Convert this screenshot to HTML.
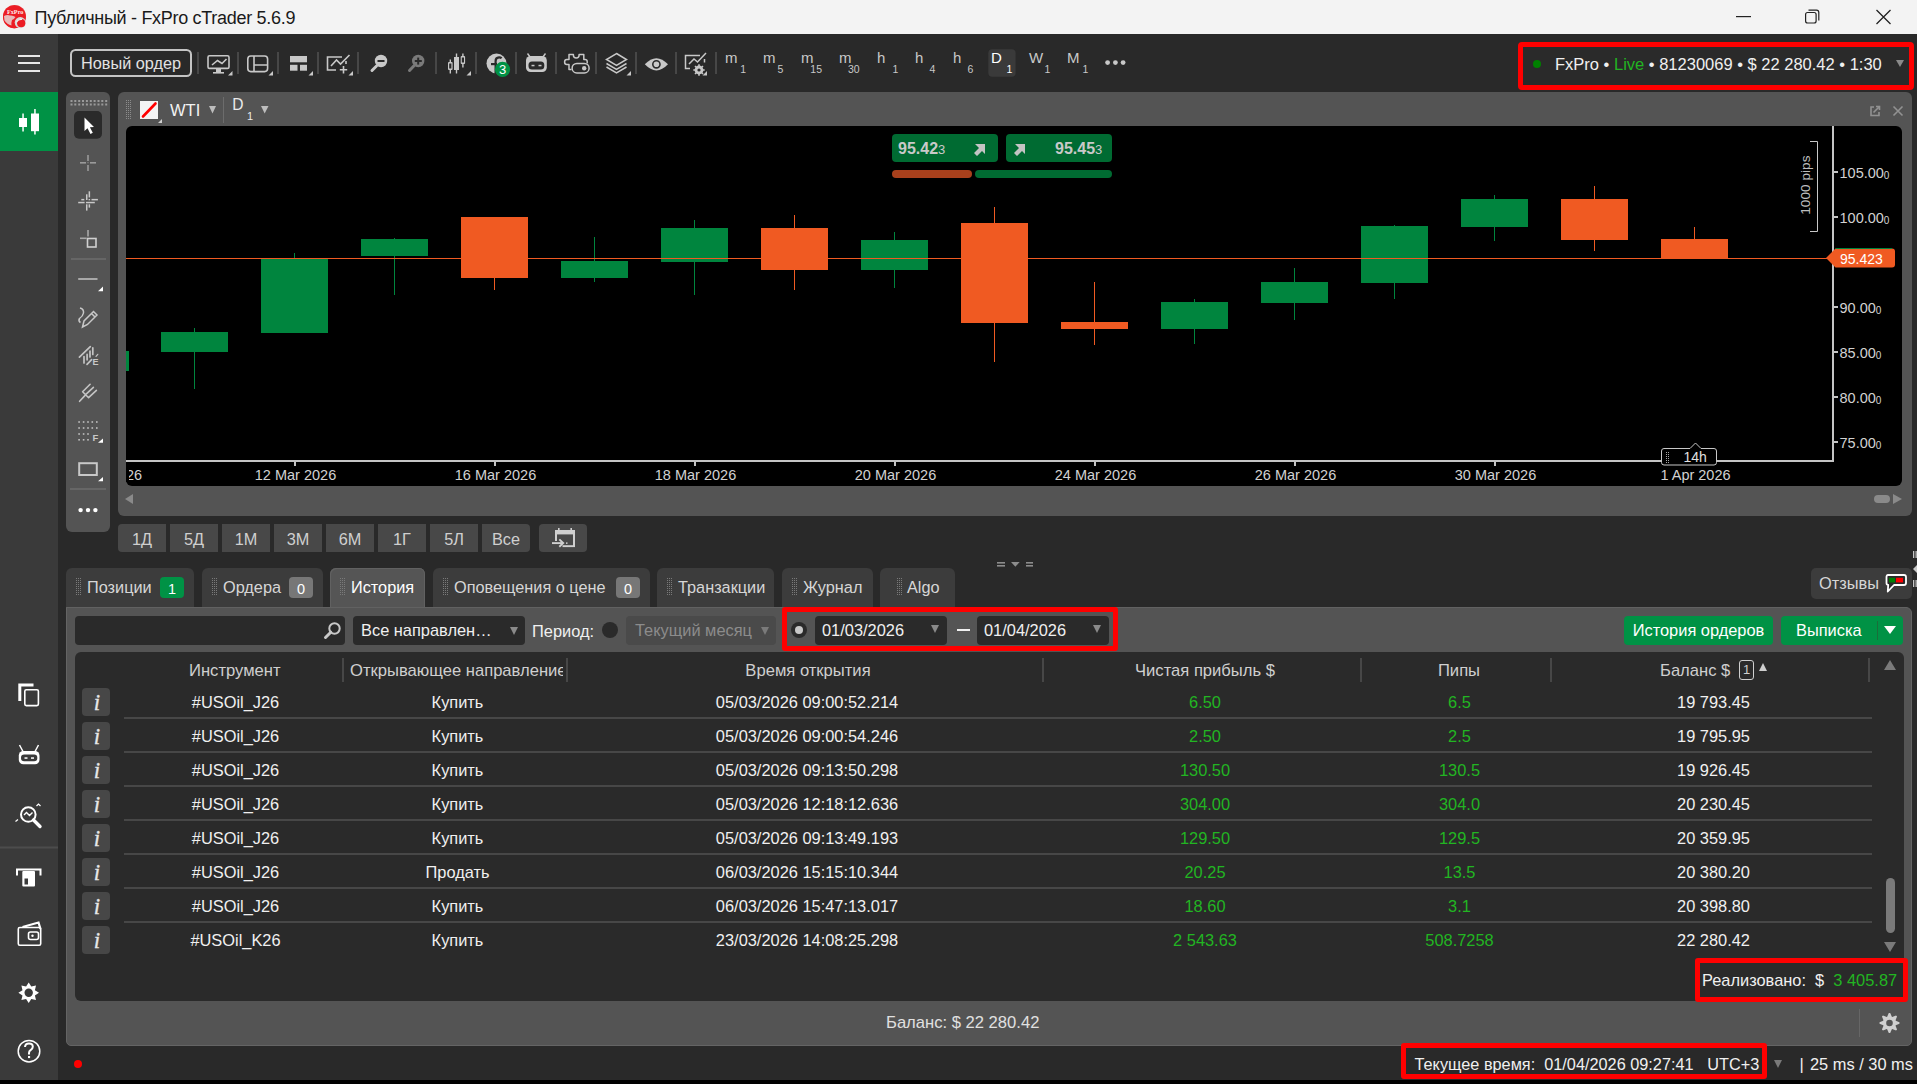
<!DOCTYPE html>
<html><head><meta charset="utf-8">
<style>
*{margin:0;padding:0;box-sizing:border-box}
html,body{width:1917px;height:1084px;overflow:hidden;background:#292929;font-family:"Liberation Sans",sans-serif;font-size:16px;color:#e6e6e6}
.a{position:absolute}
.t{position:absolute;white-space:pre;line-height:1}
svg{position:absolute;overflow:visible}
.btn{position:absolute;top:524px;height:28px;background:#484848;color:#cfcfcf;font-size:16.3px;line-height:30px;text-align:center}
.tab{position:absolute;top:568px;height:39px;background:#3c3c3c;border-radius:6px 6px 0 0;color:#d6d6d6;font-size:16.3px;line-height:38px;padding-left:21px;white-space:pre}
.tab.act{background:#555555;color:#ffffff;height:40px;box-shadow:inset 1px 1px 0 #616161,inset -1px 0 0 #616161}
.grip{position:absolute;left:10px;top:10px}
.badge{display:inline-block;position:absolute;right:10px;top:9px;width:24px;height:21px;border-radius:4px;color:#fff;text-align:center;line-height:24px;font-size:14.5px}
.ib{position:absolute;left:82px;width:28px;height:28px;background:#474747;border-radius:4px;color:#e8e8e8;font-family:"Liberation Serif",serif;font-style:italic;font-size:23px;line-height:29px;text-align:center;text-indent:2px;color:#e8e8e8;-webkit-text-stroke:0.3px #e8e8e8}
.td{position:absolute;width:300px;height:34px;line-height:34px;text-align:center;font-size:16.4px;white-space:pre}
.th{position:absolute;top:659px;height:24px;line-height:24px;font-size:16.6px;color:#cfcfcf;white-space:pre}
.csep{position:absolute;top:658px;width:2px;height:24px;background:#474747}
.inp{position:absolute;top:616px;height:29px;background:#2a2a2a;border-radius:4px;font-size:16.4px;line-height:29px;color:#f0f0f0;white-space:pre}
.arr{position:absolute;width:0;height:0;border-left:4px solid transparent;border-right:4px solid transparent;border-top:8px solid #8a8a8a}

</style></head><body>
<!-- TITLE BAR -->
<div class="a" style="left:0;top:0;width:1917px;height:34px;background:#f3f3f3"></div>
<div class="a" style="left:3px;top:5px;width:23px;height:23px;border-radius:50%;background:#e8262b"></div>
<div class="t" style="left:34.5px;top:8.6px;font-size:18px;letter-spacing:-0.3px;color:#1a1a1a">Публичный - FxPro cTrader 5.6.9</div>


<!-- LEFT NAV -->
<div class="a" style="left:0;top:34px;width:58px;height:1046px;background:#3a3a3a"></div>
<div class="a" style="left:0;top:92px;width:58px;height:59px;background:#009245"></div>

<!-- TITLE DETAILS -->
<svg class="a" style="left:0;top:0" width="40" height="34">
<circle cx="14.3" cy="17.2" r="11.2" fill="#ec1c24"/>
<path d="M4 16 Q7 14.5 10 15.5 Q13 15 15.5 17 Q14 19.5 12 20 Q11 23 11.5 25.5 Q7 24.5 4.5 20.5 Z" fill="#e8d6d6" opacity="0.85"/>
<circle cx="20.3" cy="22.6" r="5.6" fill="#d9d9d9"/>
<circle cx="21.2" cy="23.2" r="4.1" fill="#ec1c24"/>
<path d="M16.5 22 Q18.5 19 22 19.5" stroke="#f4f4f4" stroke-width="1.2" fill="none"/>
<text x="7" y="13.6" font-size="6.2" fill="#ffeaea" font-family="Liberation Serif" font-weight="bold">FxPro</text>
</svg>
<svg class="a" style="left:1720px;top:0" width="197" height="34">
<rect x="16" y="16" width="15" height="1.2" fill="#222"/>
<rect x="85.6" y="12.5" width="10.5" height="10.5" rx="2" fill="none" stroke="#222" stroke-width="1.2"/>
<path d="M88.5 10.2 H96.5 Q98.8 10.2 98.8 12.5 V20.5" fill="none" stroke="#222" stroke-width="1.2"/>
<path d="M156.5 10 L170.5 24 M170.5 10 L156.5 24" stroke="#222" stroke-width="1.3"/>
</svg>

<!-- TOP TOOLBAR -->
<svg class="a" style="left:0;top:34px" width="1917" height="58" viewBox="0 34 1917 58">
<g fill="#e6e6e6"><rect x="18" y="55" width="22" height="2"/><rect x="18" y="62" width="22" height="2"/><rect x="18" y="70" width="22" height="2"/></g>
<rect x="71" y="50" width="120" height="26" rx="4.5" fill="none" stroke="#c4c4c4" stroke-width="2"/>
<text x="81" y="69" font-size="16.3" fill="#e2e2e2" font-family="Liberation Sans">Новый ордер</text>
<g fill="#474747">
<rect x="197" y="52" width="2" height="22"/><rect x="237" y="52" width="2" height="22"/><rect x="277" y="52" width="2" height="22"/>
<rect x="317" y="52" width="2" height="22"/><rect x="357" y="52" width="2" height="22"/><rect x="435" y="52" width="2" height="22"/>
<rect x="475" y="52" width="2" height="22"/><rect x="515" y="52" width="2" height="22"/><rect x="555" y="52" width="2" height="22"/>
<rect x="595" y="52" width="2" height="22"/><rect x="635" y="52" width="2" height="22"/><rect x="675" y="52" width="2" height="22"/>
<rect x="715" y="52" width="2" height="22"/>
</g>
<g fill="#c8c8c8">
<path d="M228 75.5 L232.5 71 V75.5 Z"/><path d="M268.5 75.5 L273 71 V75.5 Z"/><path d="M308.5 75.5 L313 71 V75.5 Z"/>
<path d="M348.5 75.5 L353 71 V75.5 Z"/><path d="M466.5 75.5 L471 71 V75.5 Z"/><path d="M626.5 75.5 L631 71 V75.5 Z"/>
<path d="M702.5 75.5 L707 71 V75.5 Z"/>
</g>
<!-- monitor -->
<g stroke="#c8c8c8" fill="none" stroke-width="1.6">
<rect x="208" y="55.8" width="21" height="12.6" rx="1.5"/>
<path d="M212 65 L217.5 60.5 L222 63.5 L226.5 59"/>
</g>
<rect x="216" y="68.5" width="5" height="4" fill="#c8c8c8"/><rect x="213" y="72" width="11" height="1.6" fill="#c8c8c8"/>
<!-- layout -->
<g stroke="#c8c8c8" fill="none" stroke-width="1.6">
<rect x="247.8" y="56" width="19.8" height="15.6" rx="3"/>
<path d="M254 56 V71.6 M254 65 H267.6"/>
</g>
<!-- template -->
<g fill="#c8c8c8"><rect x="290" y="56" width="17" height="6.3"/><rect x="290" y="64.8" width="7.5" height="5.9"/><rect x="300" y="64.8" width="7" height="5.9"/></g>
<!-- add indicator -->
<g stroke="#c8c8c8" fill="none" stroke-width="1.6">
<path d="M342 57 H327.5 V70 H336"/>
<path d="M331 66 L336.5 60 L340.5 64 L349.5 55"/>
<path d="M343.5 66 V73.5 M339.8 69.8 H347.2"/>
<path d="M346 61 V64"/>
</g>
<!-- zoom out -->
<circle cx="381" cy="61" r="6.2" fill="#c8c8c8"/>
<rect x="377.5" y="60" width="7" height="2" fill="#2a2a2a"/>
<path d="M376.5 66 L372 70.5" stroke="#c8c8c8" stroke-width="3" stroke-linecap="round"/>
<!-- zoom in -->
<circle cx="418.2" cy="61" r="6.2" fill="#7a7a7a"/>
<rect x="414.8" y="60" width="7" height="2" fill="#2a2a2a"/><rect x="417.2" y="57.6" width="2" height="7" fill="#2a2a2a"/>
<path d="M413.8 66 L409.5 70.5" stroke="#7a7a7a" stroke-width="3" stroke-linecap="round"/>
<!-- candles -->
<g fill="#c8c8c8">
<rect x="449.6" y="59.5" width="1.4" height="14"/><rect x="448" y="62" width="4.6" height="8" rx="1"/>
<rect x="455.8" y="53.5" width="1.4" height="20"/><rect x="454" y="57" width="5" height="13"/>
<rect x="462.2" y="53.5" width="1.4" height="14"/><rect x="460.7" y="56" width="4.4" height="8" rx="1"/>
</g>
<rect x="449.2" y="63.5" width="2.2" height="5" fill="#2a2a2a"/><rect x="461.8" y="57.5" width="2.2" height="5" fill="#2a2a2a"/>
<!-- copy trading badge -->
<circle cx="496.5" cy="63.5" r="10" fill="#c8c8c8"/>
<path d="M495.6 74 V61 Q495.6 57.6 499 57.4 Q500.6 57.3 501.6 58.3" stroke="#2a2a2a" stroke-width="2.2" fill="none"/><rect x="491" y="63" width="6" height="2.2" fill="#2a2a2a"/>
<circle cx="502.5" cy="69.4" r="7.6" fill="#009245"/>
<text x="502.5" y="74.3" font-size="13" fill="#ffffff" font-family="Liberation Sans" text-anchor="middle">3</text>
<!-- robot -->
<path d="M527.5 53.5 L530.5 57.5 M545.5 53.5 L542.5 57.5" stroke="#c8c8c8" stroke-width="1.4"/>
<rect x="526" y="56" width="20.8" height="16" rx="4.5" fill="#c8c8c8"/>
<rect x="528.5" y="61.5" width="15.8" height="8" rx="3.5" fill="#2a2a2a"/>
<rect x="531.5" y="64.8" width="3" height="1.5" fill="#c8c8c8"/><rect x="538.5" y="64.8" width="3" height="1.5" fill="#c8c8c8"/>
<!-- plugin -->
<g stroke="#c8c8c8" fill="none" stroke-width="1.5" stroke-linejoin="round">
<path d="M571.5 69.4 H569 V64.5 H566.8 Q564.6 64.5 564.6 62 Q564.6 59.5 566.8 59.5 H569 V54.4 H573.4 V55.3 Q573.4 58 576.25 58 Q579.1 58 579.1 55.3 V54.4 H583.8 V59.6 H585 Q587.2 59.6 587.2 61.6 V63.6"/>
<rect x="572.1" y="63.4" width="17" height="9.5" rx="4.75"/>
</g>
<circle cx="584.2" cy="68.2" r="2.2" fill="#c8c8c8"/>
<!-- layers -->
<g stroke="#c8c8c8" fill="none" stroke-width="1.5">
<path d="M616.5 53.5 L626.5 59.5 L616.5 65.5 L606.5 59.5 Z"/>
<path d="M606.5 63.5 L616.5 69.5 L626.5 63.5"/>
<path d="M606.5 67 L616.5 73 L626.5 67"/>
</g>
<!-- eye -->
<path d="M644.8 64.3 Q656.4 52 668 64.3 Q656.4 76.5 644.8 64.3 Z" fill="#c8c8c8"/>
<circle cx="656.4" cy="64.3" r="3.6" fill="none" stroke="#2a2a2a" stroke-width="1.6"/>
<!-- chart settings -->
<g stroke="#c8c8c8" fill="none" stroke-width="1.5">
<path d="M700 55.5 H685.5 V68.5 H690"/>
<path d="M689 64 L694 59 L697.5 62 L706 53"/>
<path d="M704.5 59 V62.5"/>
</g>
<circle cx="699" cy="70" r="4.4" fill="#c8c8c8"/><circle cx="699" cy="70" r="1.6" fill="#2a2a2a"/>
<g stroke="#c8c8c8" stroke-width="1.6"><path d="M699 64.3 V75.7 M693.3 70 H704.7 M695 66 L703 74 M703 66 L695 74"/></g>
<circle cx="699" cy="70" r="1.6" fill="#2a2a2a"/>
<!-- timeframes -->
<g fill="#c8c8c8" font-family="Liberation Sans">
<text x="725" y="63" font-size="15">m</text><text x="740.3" y="72.8" font-size="10.5">1</text>
<text x="763" y="63" font-size="15">m</text><text x="777.6" y="72.8" font-size="10.5">5</text>
<text x="801" y="63" font-size="15">m</text><text x="810.3" y="72.8" font-size="10.5">15</text>
<text x="839" y="63" font-size="15">m</text><text x="848" y="72.8" font-size="10.5">30</text>
<text x="877" y="63" font-size="15">h</text><text x="892.4" y="72.8" font-size="10.5">1</text>
<text x="915" y="63" font-size="15">h</text><text x="929.6" y="72.8" font-size="10.5">4</text>
<text x="953" y="63" font-size="15">h</text><text x="967.4" y="72.8" font-size="10.5">6</text>
<text x="1029" y="63" font-size="15">W</text><text x="1044.6" y="72.8" font-size="10.5">1</text>
<text x="1067" y="63" font-size="15">M</text><text x="1082.6" y="72.8" font-size="10.5">1</text>
</g>
<rect x="988.3" y="49.2" width="27.3" height="27.5" rx="4" fill="#3a3a3a"/>
<text x="991" y="63" font-size="15" fill="#ffffff" font-family="Liberation Sans">D</text>
<text x="1006.6" y="72.8" font-size="10.5" fill="#ffffff" font-family="Liberation Sans">1</text>
<g fill="#c8c8c8"><circle cx="1107.6" cy="62.6" r="2.4"/><circle cx="1115.4" cy="62.6" r="2.4"/><circle cx="1123.1" cy="62.6" r="2.4"/></g>
<!-- account -->
<rect x="1520.5" y="44.5" width="391" height="43" fill="#2a2a2a" stroke="#ff0000" stroke-width="5" rx="1.5"/>
<circle cx="1537" cy="64" r="4" fill="#008000"/>
<text x="1555" y="70" font-size="16.5" fill="#f0f0f0" font-family="Liberation Sans" xml:space="preserve">FxPro • <tspan fill="#22b522">Live</tspan> • 81230069 • $ 22 280.42 • 1:30</text>
<path d="M1896 60 L1904 60 L1900 67 Z" fill="#8a8a8a"/>
</svg>


<!-- DRAWING TOOLBAR -->
<div class="a" style="left:66px;top:92px;width:44px;height:440px;background:#545454;border-radius:6px"></div>


<svg class="a" style="left:0;top:0" width="120" height="1084" viewBox="0 0 120 1084">
<!-- green candles -->
<g fill="#ffffff">
<rect x="22.3" y="113.5" width="1.5" height="18"/><rect x="19" y="118" width="8" height="9"/>
<rect x="34.2" y="109" width="1.5" height="25.5"/><rect x="31" y="113.5" width="8" height="17.7"/>
</g>
<!-- copy -->
<path d="M33.5 685 H19.8 V701" stroke="#fff" stroke-width="3" fill="none"/>
<rect x="24.8" y="689.8" width="13.6" height="15.8" rx="1.5" stroke="#fff" stroke-width="1.6" fill="none"/>
<!-- robot -->
<path d="M19.5 745 L23 751.5 M38.5 745 L35 751.5" stroke="#fff" stroke-width="1.5"/>
<rect x="18.8" y="751" width="20.7" height="13.3" rx="4.5" fill="#fff"/>
<rect x="21" y="754.5" width="16.3" height="6.8" rx="3.2" fill="#3a3a3a"/>
<rect x="24.5" y="757.3" width="3" height="1.5" fill="#fff"/><rect x="31" y="757.3" width="3" height="1.5" fill="#fff"/>
<!-- search chart -->
<circle cx="28.3" cy="814.5" r="7.3" stroke="#fff" stroke-width="2" fill="none"/>
<path d="M24 815 L26.5 812.5 L29.5 815.5 L32.5 812.5" stroke="#fff" stroke-width="1.4" fill="none"/>
<path d="M33.5 820 L40 826.5" stroke="#fff" stroke-width="3.4" stroke-linecap="round"/>
<path d="M15.5 821.5 L18 819.5 M36.5 806 L38.5 804 L40.5 806" stroke="#fff" stroke-width="1.2" fill="none"/>
<rect x="0" y="846.5" width="58" height="2" fill="#4c4c4c"/>
<!-- atm -->
<path d="M17 875.5 V869.5 H40.5 V875.5" stroke="#fff" stroke-width="2" fill="none"/>
<rect x="22.3" y="871" width="12.7" height="15.5" rx="1" fill="#fff"/>
<rect x="24.5" y="878.5" width="3.5" height="6" fill="#3a3a3a"/>
<!-- wallet -->
<path d="M22.5 927 L38.5 922.5 L40.5 929" stroke="#fff" stroke-width="2.2" fill="none"/>
<rect x="18.3" y="927.5" width="22.4" height="17.8" rx="1.5" stroke="#fff" stroke-width="1.6" fill="none"/>
<rect x="28.5" y="932" width="10" height="7.5" rx="2" stroke="#fff" stroke-width="1.6" fill="#3a3a3a"/>
<circle cx="32.5" cy="935.8" r="1.2" fill="#fff"/>
<!-- gear -->
<g transform="translate(28.7 992.8)">
<path d="M0 -10.3 L2.6 -6.2 L7.3 -7.3 L6.2 -2.6 L10.3 0 L6.2 2.6 L7.3 7.3 L2.6 6.2 L0 10.3 L-2.6 6.2 L-7.3 7.3 L-6.2 2.6 L-10.3 0 L-6.2 -2.6 L-7.3 -7.3 L-2.6 -6.2 Z" fill="#fff"/>
<circle r="4.2" fill="#3a3a3a"/>
</g>
<!-- help -->
<circle cx="29" cy="1051.2" r="10.8" stroke="#fff" stroke-width="1.5" fill="none"/>
<path d="M25 1047 Q25.3 1043.6 29 1043.6 Q32.8 1043.6 32.8 1046.8 Q32.8 1048.8 30.6 1050.2 Q29 1051.2 29 1053 V1054.4" stroke="#fff" stroke-width="2" fill="none"/><rect x="28" y="1056" width="2.1" height="2.1" fill="#fff"/>

<!-- drawing toolbar -->
<g fill="#9a9a9a">
<rect x="70.5" y="100" width="2" height="2"/><rect x="70.5" y="103.5" width="2" height="2"/><rect x="74.3" y="100" width="2" height="2"/><rect x="74.3" y="103.5" width="2" height="2"/><rect x="78.2" y="100" width="2" height="2"/><rect x="78.2" y="103.5" width="2" height="2"/><rect x="82.0" y="100" width="2" height="2"/><rect x="82.0" y="103.5" width="2" height="2"/><rect x="85.9" y="100" width="2" height="2"/><rect x="85.9" y="103.5" width="2" height="2"/><rect x="89.8" y="100" width="2" height="2"/><rect x="89.8" y="103.5" width="2" height="2"/><rect x="93.6" y="100" width="2" height="2"/><rect x="93.6" y="103.5" width="2" height="2"/><rect x="97.5" y="100" width="2" height="2"/><rect x="97.5" y="103.5" width="2" height="2"/><rect x="101.3" y="100" width="2" height="2"/><rect x="101.3" y="103.5" width="2" height="2"/><rect x="105.2" y="100" width="2" height="2"/><rect x="105.2" y="103.5" width="2" height="2"/></g>

<rect x="74" y="111" width="28" height="27.7" rx="5" fill="#2a2a2a"/>
<path d="M84.5 117.5 L84.5 131 L87.5 128.2 L90.5 134 L92.8 132.8 L89.9 127.2 L94 127 Z" fill="#ffffff"/>
<!-- crosshair -->
<g fill="#9a9a9a">
<rect x="80" y="162" width="6" height="1.6"/><rect x="90" y="162" width="6" height="1.6"/>
<rect x="87.2" y="155" width="1.6" height="6"/><rect x="87.2" y="165" width="1.6" height="6"/>
<rect x="87.5" y="162.2" width="1" height="1"/>
</g>
<!-- crosshair 2 -->
<g fill="#c8c8c8">
<rect x="78.2" y="201.8" width="6.4" height="1.5"/><rect x="86" y="201.8" width="8.8" height="1.5"/>
<rect x="81.3" y="198.9" width="3" height="1.5"/><rect x="91.5" y="198.9" width="6.4" height="1.5"/>
<rect x="86" y="194.3" width="1.5" height="5.7"/><rect x="86" y="204.3" width="1.5" height="6.3"/>
<rect x="88.6" y="191.3" width="1.5" height="6.1"/><rect x="88.6" y="204.3" width="1.5" height="3.3"/>
<rect x="88.6" y="199" width="1.5" height="1.3"/>
</g>
<!-- crosshair box -->
<g fill="#a8a8a8">
<rect x="80" y="237.5" width="6.5" height="1.6"/><rect x="87.2" y="230" width="1.6" height="6.5"/>
</g>
<rect x="87.5" y="238.5" width="8.5" height="8.5" stroke="#d0d0d0" stroke-width="1.6" fill="none"/>
<rect x="71" y="258" width="35" height="2" fill="#666"/>
<!-- line -->
<rect x="78.2" y="278" width="19.3" height="2" fill="#a8a8a8"/>
<path d="M98 291.3 L103 286.6 V291.3 Z" fill="#fff"/>
<!-- pencil -->
<g stroke="#c8c8c8" stroke-width="1.5" fill="none">
<path d="M80 308 Q84 309 83.5 313 Q83 316 79.5 318.5 Q78 321 80.5 322.5"/>
<path d="M82.5 327 L84 321 L93.5 311.5 L97 315 L87.5 324.5 Z M91.5 313.5 L95 317"/>
</g>
<!-- fib fan -->
<g stroke="#c4c4c4" stroke-width="1.7" fill="none" stroke-linecap="round">
<path d="M79.4 357.2 L90.3 346.6"/>
<path d="M84 356.6 V363 M87.1 354.4 V359.8 M90 351.2 V357 M92.8 347.8 V354.5"/>
<path d="M87 364.4 L91.6 359.7"/>
<path d="M96 356.3 L97.8 354.3" stroke-width="1.2"/>
</g>
<text x="92.6" y="365" font-size="9" font-weight="bold" fill="#c8c8c8" font-family="Liberation Sans">E</text>
<!-- pitchfork -->
<g stroke="#c4c4c4" stroke-width="1.6" fill="none" stroke-linecap="round">
<path d="M79.6 401.3 L85.8 394.6 M82.6 391.8 L88.6 397.7 M82.6 391.8 L90.1 384.3 M85.6 394.7 L93.4 387.3 M88.6 397.7 L96.4 390.3"/>
</g>
<!-- fib grid -->
<g fill="#c0c0c0">
<rect x="78.3" y="421.2" width="1.6" height="1.6"/><rect x="82.8" y="421.2" width="1.6" height="1.6"/><rect x="87.2" y="421.2" width="1.6" height="1.6"/><rect x="91.5" y="421.2" width="1.6" height="1.6"/><rect x="96.0" y="421.2" width="1.6" height="1.6"/><rect x="78.3" y="427.2" width="1.6" height="1.6"/><rect x="82.8" y="427.2" width="1.6" height="1.6"/><rect x="87.2" y="427.2" width="1.6" height="1.6"/><rect x="91.5" y="427.2" width="1.6" height="1.6"/><rect x="96.0" y="427.2" width="1.6" height="1.6"/><rect x="78.3" y="433.2" width="1.6" height="1.6"/><rect x="82.8" y="433.2" width="1.6" height="1.6"/><rect x="87.2" y="433.2" width="1.6" height="1.6"/><rect x="78.3" y="439.0" width="1.6" height="1.6"/><rect x="82.8" y="439.0" width="1.6" height="1.6"/><rect x="87.2" y="439.0" width="1.6" height="1.6"/>
</g>
<text x="92.5" y="441" font-size="9.5" font-weight="bold" fill="#c8c8c8" font-family="Liberation Sans">F</text>
<path d="M98 442.8 L103 438.6 V442.8 Z" fill="#fff"/>
<rect x="79.2" y="463.2" width="17.6" height="11.8" stroke="#c8c8c8" stroke-width="2" fill="none"/>
<path d="M98 481.3 L103 476.9 V481.3 Z" fill="#fff"/>
<rect x="70" y="488" width="36" height="2" fill="#666"/>
<g fill="#fff"><circle cx="80.6" cy="510.1" r="2.2"/><circle cx="88" cy="510.1" r="2.2"/><circle cx="95.4" cy="510.1" r="2.2"/></g>
</svg>


<!-- CHART PANEL -->
<div class="a" style="left:118px;top:92px;width:1794px;height:424px;background:#545454;border-radius:6px"></div>
<div class="a" style="left:126px;top:126px;width:1776px;height:360px;background:#000;border-radius:6px"></div>


<!-- CHART SVG -->
<svg class="a" style="left:0;top:0" width="1917" height="1084" viewBox="0 0 1917 1084">
<!-- header grip -->
<g fill="#8c8c8c">
<rect x="126" y="100" width="1" height="1"/><rect x="128" y="100" width="1" height="1"/><rect x="130" y="100" width="1" height="1"/>
<rect x="126" y="102" width="1" height="1"/><rect x="128" y="102" width="1" height="1"/><rect x="130" y="102" width="1" height="1"/>
<rect x="126" y="104" width="1" height="1"/><rect x="128" y="104" width="1" height="1"/><rect x="130" y="104" width="1" height="1"/>
<rect x="126" y="106" width="1" height="1"/><rect x="128" y="106" width="1" height="1"/><rect x="130" y="106" width="1" height="1"/>
<rect x="126" y="108" width="1" height="1"/><rect x="128" y="108" width="1" height="1"/><rect x="130" y="108" width="1" height="1"/>
<rect x="126" y="110" width="1" height="1"/><rect x="128" y="110" width="1" height="1"/><rect x="130" y="110" width="1" height="1"/>
<rect x="126" y="112" width="1" height="1"/><rect x="128" y="112" width="1" height="1"/><rect x="130" y="112" width="1" height="1"/>
<rect x="126" y="114" width="1" height="1"/><rect x="128" y="114" width="1" height="1"/><rect x="130" y="114" width="1" height="1"/>
<rect x="126" y="116" width="1" height="1"/><rect x="128" y="116" width="1" height="1"/><rect x="130" y="116" width="1" height="1"/>
<rect x="126" y="118" width="1" height="1"/><rect x="128" y="118" width="1" height="1"/><rect x="130" y="118" width="1" height="1"/>
</g>
<rect x="140" y="101" width="18" height="18" fill="#f4f4f4"/>
<line x1="143" y1="116.5" x2="155.5" y2="103.5" stroke="#f00" stroke-width="2.6" stroke-linecap="round"/>
<path d="M158 123 L162 119 L162 123 Z" fill="#d0d0d0"/>
<text x="170" y="116" font-size="16.5" fill="#f2f2f2" font-family="Liberation Sans">WTI</text>
<path d="M209 106 L216 106 L212.5 113.5 Z" fill="#bdbdbd"/>
<rect x="223" y="97" width="1" height="26" fill="#6c6c6c"/>
<text x="232.3" y="110.2" font-size="15.6" fill="#eaeaea" font-family="Liberation Sans">D</text>
<text x="247" y="120" font-size="11" fill="#eaeaea" font-family="Liberation Sans">1</text>
<path d="M261 106 L268.5 106 L264.7 113.5 Z" fill="#bdbdbd"/>
<!-- popout & close -->
<g stroke="#929292" stroke-width="1.6" fill="none">
<path d="M1874 107 H1871 V115.5 H1879 V112"/>
<path d="M1873.5 112.5 L1879.5 106.5 M1876 106.5 H1879.5 V110"/>
<path d="M1893.5 106.5 L1902.5 115.5 M1902.5 106.5 L1893.5 115.5"/>
</g>
<!-- candles -->
<rect x="126" y="351" width="3" height="20" fill="#00853e"/>
<rect x="194" y="328" width="1" height="61" fill="#00853e"/>
<rect x="161" y="332" width="67" height="20" fill="#00853e"/>
<rect x="294" y="253" width="1" height="80" fill="#00853e"/>
<rect x="261" y="258" width="67" height="75" fill="#00853e"/>
<rect x="394" y="238" width="1" height="57" fill="#00853e"/>
<rect x="361" y="239" width="67" height="17" fill="#00853e"/>
<rect x="494" y="217" width="1" height="73" fill="#f05a22"/>
<rect x="461" y="217" width="67" height="61" fill="#f05a22"/>
<rect x="594" y="237" width="1" height="45" fill="#00853e"/>
<rect x="561" y="261" width="67" height="17" fill="#00853e"/>
<rect x="694" y="220" width="1" height="75" fill="#00853e"/>
<rect x="661" y="228" width="67" height="34" fill="#00853e"/>
<rect x="794" y="215" width="1" height="75" fill="#f05a22"/>
<rect x="761" y="228" width="67" height="42" fill="#f05a22"/>
<rect x="894" y="232" width="1" height="56" fill="#00853e"/>
<rect x="861" y="240" width="67" height="30" fill="#00853e"/>
<rect x="994" y="207" width="1" height="155" fill="#f05a22"/>
<rect x="961" y="223" width="67" height="100" fill="#f05a22"/>
<rect x="1094" y="282" width="1" height="63" fill="#f05a22"/>
<rect x="1061" y="322" width="67" height="7" fill="#f05a22"/>
<rect x="1194" y="299" width="1" height="45" fill="#00853e"/>
<rect x="1161" y="302" width="67" height="27" fill="#00853e"/>
<rect x="1294" y="268" width="1" height="52" fill="#00853e"/>
<rect x="1261" y="282" width="67" height="21" fill="#00853e"/>
<rect x="1394" y="225" width="1" height="74" fill="#00853e"/>
<rect x="1361" y="226" width="67" height="57" fill="#00853e"/>
<rect x="1494" y="195" width="1" height="46" fill="#00853e"/>
<rect x="1461" y="199" width="67" height="28" fill="#00853e"/>
<rect x="1594" y="186" width="1" height="65" fill="#f05a22"/>
<rect x="1561" y="199" width="67" height="41" fill="#f05a22"/>
<rect x="1694" y="227" width="1" height="31" fill="#f05a22"/>
<rect x="1661" y="239" width="67" height="19" fill="#f05a22"/>

<!-- price line -->
<rect x="126" y="258" width="1707" height="1" fill="#f05a22"/>
<!-- axes -->
<rect x="1832" y="126" width="2" height="335" fill="#c4c4c4"/>
<rect x="126" y="460" width="1708" height="2" fill="#c4c4c4"/>
<g fill="#c4c4c4">
<rect x="1834" y="171" width="4" height="2"/><rect x="1834" y="216" width="4" height="2"/>
<rect x="1834" y="306" width="4" height="2"/><rect x="1834" y="351" width="4" height="2"/>
<rect x="1834" y="396" width="4" height="2"/><rect x="1834" y="441" width="4" height="2"/>
<rect x="294" y="462" width="2" height="4"/><rect x="494" y="462" width="2" height="4"/><rect x="694" y="462" width="2" height="4"/>
<rect x="894" y="462" width="2" height="4"/><rect x="1094" y="462" width="2" height="4"/><rect x="1294" y="462" width="2" height="4"/>
<rect x="1494" y="462" width="2" height="4"/>
</g>
<g font-size="14.5" fill="#d2d2d2" font-family="Liberation Sans">
<text x="1839.5" y="178">105.00<tspan font-size="10" dy="1">0</tspan></text>
<text x="1839.5" y="223">100.00<tspan font-size="10" dy="1">0</tspan></text>
<text x="1839.5" y="313">90.00<tspan font-size="10" dy="1">0</tspan></text>
<text x="1839.5" y="358">85.00<tspan font-size="10" dy="1">0</tspan></text>
<text x="1839.5" y="403">80.00<tspan font-size="10" dy="1">0</tspan></text>
<text x="1839.5" y="448">75.00<tspan font-size="10" dy="1">0</tspan></text>
</g>
<g font-size="14.5" fill="#d2d2d2" font-family="Liberation Sans" text-anchor="middle">
<text x="295.5" y="480">12 Mar 2026</text>
<text x="495.5" y="480">16 Mar 2026</text>
<text x="695.5" y="480">18 Mar 2026</text>
<text x="895.5" y="480">20 Mar 2026</text>
<text x="1095.5" y="480">24 Mar 2026</text>
<text x="1295.5" y="480">26 Mar 2026</text>
<text x="1495.5" y="480">30 Mar 2026</text>
<text x="1695.5" y="480">1 Apr 2026</text>
</g>
<text x="126" y="480" font-size="14.5" fill="#d2d2d2" font-family="Liberation Sans">26</text>
<rect x="126" y="468" width="3" height="14" fill="#000"/>
<!-- 1000 pips -->
<text transform="translate(1810 214.8) rotate(-90)" font-size="13.7" fill="#bdbdbd" font-family="Liberation Sans">1000 pips</text>
<path d="M1810 141.5 H1817.5 V231.5 H1810" stroke="#c8c8c8" stroke-width="1" fill="none"/>
<!-- price tag -->
<path d="M1826 258 L1835.5 248.5 H1892 Q1895 248.5 1895 251.5 V264.5 Q1895 267.5 1892 267.5 H1835.5 Z" fill="#f05a22"/>
<path d="M1835.5 248.5 H1892" stroke="#00853e" stroke-width="1"/>
<text x="1840" y="264" font-size="14" fill="#ffffff" font-family="Liberation Sans">95.423</text>
<!-- 14h tag -->
<path d="M1664 448.5 H1690 L1695.5 443 L1701 448.5 H1714 Q1716.5 448.5 1716.5 451 V462.5 Q1716.5 465 1714 465 H1664 Q1661.5 465 1661.5 462.5 V451 Q1661.5 448.5 1664 448.5 Z" fill="#000" stroke="#c8c8c8" stroke-width="1"/>
<g fill="#a8a8a8"><rect x="1666" y="452" width="1" height="1"/><rect x="1668" y="452" width="1" height="1"/><rect x="1666" y="454" width="1" height="1"/><rect x="1668" y="454" width="1" height="1"/><rect x="1666" y="456" width="1" height="1"/><rect x="1668" y="456" width="1" height="1"/><rect x="1666" y="458" width="1" height="1"/><rect x="1668" y="458" width="1" height="1"/><rect x="1666" y="460" width="1" height="1"/><rect x="1668" y="460" width="1" height="1"/><rect x="1666" y="462" width="1" height="1"/><rect x="1668" y="462" width="1" height="1"/></g>
<text x="1683.5" y="462" font-size="14" fill="#e0e0e0" font-family="Liberation Sans">14h</text>
<!-- buy/sell -->
<rect x="892" y="134" width="106" height="28" rx="4" fill="#006b32"/>
<rect x="1006" y="134" width="106" height="28" rx="4" fill="#006b32"/>
<text x="898" y="154" font-size="16" font-weight="bold" fill="#c9c9c9" font-family="Liberation Sans">95.42<tspan font-size="13" font-weight="normal">3</tspan></text>
<text x="1055" y="154" font-size="16" font-weight="bold" fill="#c9c9c9" font-family="Liberation Sans">95.45<tspan font-size="13" font-weight="normal">3</tspan></text>
<path d="M975 144 L985 144 L985 154 L982 151 L977 156 L974 153 L979 148 Z" fill="#c4c4c4"/>
<path d="M1015 144 L1025 144 L1025 154 L1022 151 L1017 156 L1014 153 L1019 148 Z" fill="#c4c4c4"/>
<rect x="892" y="170" width="80" height="8" rx="4" fill="#a8401c"/>
<rect x="975" y="170" width="137" height="8" rx="4" fill="#006b32"/>
<!-- scroll row -->
<path d="M125 499 L133 494 L133 504 Z" fill="#8a8a8a"/>
<rect x="1874" y="495" width="16" height="8" rx="4" fill="#8a8a8a"/>
<path d="M1893 494 L1902 499 L1893 504 Z" fill="#8a8a8a"/>
</svg>


<!-- RANGE + TABS -->
<div class="btn" style="left:118px;width:48px;border-radius:4px 0 0 4px">1Д</div>
<div class="btn" style="left:170px;width:48px;border-radius:0">5Д</div>
<div class="btn" style="left:222px;width:48px;border-radius:0">1М</div>
<div class="btn" style="left:274px;width:48px;border-radius:0">3М</div>
<div class="btn" style="left:326px;width:48px;border-radius:0">6М</div>
<div class="btn" style="left:378px;width:48px;border-radius:0">1Г</div>
<div class="btn" style="left:430px;width:48px;border-radius:0">5Л</div>
<div class="btn" style="left:482px;width:48px;border-radius:0 4px 4px 0">Все</div>
<div class="btn" style="left:539px;width:48px;border-radius:4px"></div>
<div class="tab" style="left:66px;width:128px"><svg class="grip" width="5" height="17" viewBox="0 0 5 17"><g fill="#7a7a7a"><rect x="0" y="0" width="1" height="1"/><rect x="2" y="0" width="1" height="1"/><rect x="4" y="0" width="1" height="1"/><rect x="0" y="2" width="1" height="1"/><rect x="2" y="2" width="1" height="1"/><rect x="4" y="2" width="1" height="1"/><rect x="0" y="4" width="1" height="1"/><rect x="2" y="4" width="1" height="1"/><rect x="4" y="4" width="1" height="1"/><rect x="0" y="6" width="1" height="1"/><rect x="2" y="6" width="1" height="1"/><rect x="4" y="6" width="1" height="1"/><rect x="0" y="8" width="1" height="1"/><rect x="2" y="8" width="1" height="1"/><rect x="4" y="8" width="1" height="1"/><rect x="0" y="10" width="1" height="1"/><rect x="2" y="10" width="1" height="1"/><rect x="4" y="10" width="1" height="1"/><rect x="0" y="12" width="1" height="1"/><rect x="2" y="12" width="1" height="1"/><rect x="4" y="12" width="1" height="1"/><rect x="0" y="14" width="1" height="1"/><rect x="2" y="14" width="1" height="1"/><rect x="4" y="14" width="1" height="1"/><rect x="0" y="16" width="1" height="1"/><rect x="2" y="16" width="1" height="1"/><rect x="4" y="16" width="1" height="1"/></g></svg>Позиции<span class="badge" style="background:#009245">1</span></div>
<div class="tab" style="left:202px;width:121px"><svg class="grip" width="5" height="17" viewBox="0 0 5 17"><g fill="#7a7a7a"><rect x="0" y="0" width="1" height="1"/><rect x="2" y="0" width="1" height="1"/><rect x="4" y="0" width="1" height="1"/><rect x="0" y="2" width="1" height="1"/><rect x="2" y="2" width="1" height="1"/><rect x="4" y="2" width="1" height="1"/><rect x="0" y="4" width="1" height="1"/><rect x="2" y="4" width="1" height="1"/><rect x="4" y="4" width="1" height="1"/><rect x="0" y="6" width="1" height="1"/><rect x="2" y="6" width="1" height="1"/><rect x="4" y="6" width="1" height="1"/><rect x="0" y="8" width="1" height="1"/><rect x="2" y="8" width="1" height="1"/><rect x="4" y="8" width="1" height="1"/><rect x="0" y="10" width="1" height="1"/><rect x="2" y="10" width="1" height="1"/><rect x="4" y="10" width="1" height="1"/><rect x="0" y="12" width="1" height="1"/><rect x="2" y="12" width="1" height="1"/><rect x="4" y="12" width="1" height="1"/><rect x="0" y="14" width="1" height="1"/><rect x="2" y="14" width="1" height="1"/><rect x="4" y="14" width="1" height="1"/><rect x="0" y="16" width="1" height="1"/><rect x="2" y="16" width="1" height="1"/><rect x="4" y="16" width="1" height="1"/></g></svg>Ордера<span class="badge" style="background:#777777">0</span></div>
<div class="tab" style="left:433px;width:217px"><svg class="grip" width="5" height="17" viewBox="0 0 5 17"><g fill="#7a7a7a"><rect x="0" y="0" width="1" height="1"/><rect x="2" y="0" width="1" height="1"/><rect x="4" y="0" width="1" height="1"/><rect x="0" y="2" width="1" height="1"/><rect x="2" y="2" width="1" height="1"/><rect x="4" y="2" width="1" height="1"/><rect x="0" y="4" width="1" height="1"/><rect x="2" y="4" width="1" height="1"/><rect x="4" y="4" width="1" height="1"/><rect x="0" y="6" width="1" height="1"/><rect x="2" y="6" width="1" height="1"/><rect x="4" y="6" width="1" height="1"/><rect x="0" y="8" width="1" height="1"/><rect x="2" y="8" width="1" height="1"/><rect x="4" y="8" width="1" height="1"/><rect x="0" y="10" width="1" height="1"/><rect x="2" y="10" width="1" height="1"/><rect x="4" y="10" width="1" height="1"/><rect x="0" y="12" width="1" height="1"/><rect x="2" y="12" width="1" height="1"/><rect x="4" y="12" width="1" height="1"/><rect x="0" y="14" width="1" height="1"/><rect x="2" y="14" width="1" height="1"/><rect x="4" y="14" width="1" height="1"/><rect x="0" y="16" width="1" height="1"/><rect x="2" y="16" width="1" height="1"/><rect x="4" y="16" width="1" height="1"/></g></svg>Оповещения о цене<span class="badge" style="background:#777777">0</span></div>
<div class="tab" style="left:657px;width:117px"><svg class="grip" width="5" height="17" viewBox="0 0 5 17"><g fill="#7a7a7a"><rect x="0" y="0" width="1" height="1"/><rect x="2" y="0" width="1" height="1"/><rect x="4" y="0" width="1" height="1"/><rect x="0" y="2" width="1" height="1"/><rect x="2" y="2" width="1" height="1"/><rect x="4" y="2" width="1" height="1"/><rect x="0" y="4" width="1" height="1"/><rect x="2" y="4" width="1" height="1"/><rect x="4" y="4" width="1" height="1"/><rect x="0" y="6" width="1" height="1"/><rect x="2" y="6" width="1" height="1"/><rect x="4" y="6" width="1" height="1"/><rect x="0" y="8" width="1" height="1"/><rect x="2" y="8" width="1" height="1"/><rect x="4" y="8" width="1" height="1"/><rect x="0" y="10" width="1" height="1"/><rect x="2" y="10" width="1" height="1"/><rect x="4" y="10" width="1" height="1"/><rect x="0" y="12" width="1" height="1"/><rect x="2" y="12" width="1" height="1"/><rect x="4" y="12" width="1" height="1"/><rect x="0" y="14" width="1" height="1"/><rect x="2" y="14" width="1" height="1"/><rect x="4" y="14" width="1" height="1"/><rect x="0" y="16" width="1" height="1"/><rect x="2" y="16" width="1" height="1"/><rect x="4" y="16" width="1" height="1"/></g></svg>Транзакции</div>
<div class="tab" style="left:782px;width:91px"><svg class="grip" width="5" height="17" viewBox="0 0 5 17"><g fill="#7a7a7a"><rect x="0" y="0" width="1" height="1"/><rect x="2" y="0" width="1" height="1"/><rect x="4" y="0" width="1" height="1"/><rect x="0" y="2" width="1" height="1"/><rect x="2" y="2" width="1" height="1"/><rect x="4" y="2" width="1" height="1"/><rect x="0" y="4" width="1" height="1"/><rect x="2" y="4" width="1" height="1"/><rect x="4" y="4" width="1" height="1"/><rect x="0" y="6" width="1" height="1"/><rect x="2" y="6" width="1" height="1"/><rect x="4" y="6" width="1" height="1"/><rect x="0" y="8" width="1" height="1"/><rect x="2" y="8" width="1" height="1"/><rect x="4" y="8" width="1" height="1"/><rect x="0" y="10" width="1" height="1"/><rect x="2" y="10" width="1" height="1"/><rect x="4" y="10" width="1" height="1"/><rect x="0" y="12" width="1" height="1"/><rect x="2" y="12" width="1" height="1"/><rect x="4" y="12" width="1" height="1"/><rect x="0" y="14" width="1" height="1"/><rect x="2" y="14" width="1" height="1"/><rect x="4" y="14" width="1" height="1"/><rect x="0" y="16" width="1" height="1"/><rect x="2" y="16" width="1" height="1"/><rect x="4" y="16" width="1" height="1"/></g></svg>Журнал</div>
<div class="tab" style="left:880px;width:75px;padding-left:27px"><svg class="grip" style="left:17px" width="5" height="17" viewBox="0 0 5 17"><g fill="#7a7a7a"><rect x="0" y="0" width="1" height="1"/><rect x="2" y="0" width="1" height="1"/><rect x="4" y="0" width="1" height="1"/><rect x="0" y="2" width="1" height="1"/><rect x="2" y="2" width="1" height="1"/><rect x="4" y="2" width="1" height="1"/><rect x="0" y="4" width="1" height="1"/><rect x="2" y="4" width="1" height="1"/><rect x="4" y="4" width="1" height="1"/><rect x="0" y="6" width="1" height="1"/><rect x="2" y="6" width="1" height="1"/><rect x="4" y="6" width="1" height="1"/><rect x="0" y="8" width="1" height="1"/><rect x="2" y="8" width="1" height="1"/><rect x="4" y="8" width="1" height="1"/><rect x="0" y="10" width="1" height="1"/><rect x="2" y="10" width="1" height="1"/><rect x="4" y="10" width="1" height="1"/><rect x="0" y="12" width="1" height="1"/><rect x="2" y="12" width="1" height="1"/><rect x="4" y="12" width="1" height="1"/><rect x="0" y="14" width="1" height="1"/><rect x="2" y="14" width="1" height="1"/><rect x="4" y="14" width="1" height="1"/><rect x="0" y="16" width="1" height="1"/><rect x="2" y="16" width="1" height="1"/><rect x="4" y="16" width="1" height="1"/></g></svg>Algo</div>
<div class="tab act" style="left:330px;width:95px"><svg class="grip" width="5" height="17" viewBox="0 0 5 17"><g fill="#7a7a7a"><rect x="0" y="0" width="1" height="1"/><rect x="2" y="0" width="1" height="1"/><rect x="4" y="0" width="1" height="1"/><rect x="0" y="2" width="1" height="1"/><rect x="2" y="2" width="1" height="1"/><rect x="4" y="2" width="1" height="1"/><rect x="0" y="4" width="1" height="1"/><rect x="2" y="4" width="1" height="1"/><rect x="4" y="4" width="1" height="1"/><rect x="0" y="6" width="1" height="1"/><rect x="2" y="6" width="1" height="1"/><rect x="4" y="6" width="1" height="1"/><rect x="0" y="8" width="1" height="1"/><rect x="2" y="8" width="1" height="1"/><rect x="4" y="8" width="1" height="1"/><rect x="0" y="10" width="1" height="1"/><rect x="2" y="10" width="1" height="1"/><rect x="4" y="10" width="1" height="1"/><rect x="0" y="12" width="1" height="1"/><rect x="2" y="12" width="1" height="1"/><rect x="4" y="12" width="1" height="1"/><rect x="0" y="14" width="1" height="1"/><rect x="2" y="14" width="1" height="1"/><rect x="4" y="14" width="1" height="1"/><rect x="0" y="16" width="1" height="1"/><rect x="2" y="16" width="1" height="1"/><rect x="4" y="16" width="1" height="1"/></g></svg>История</div>

<svg class="a" style="left:0;top:0" width="600" height="560" viewBox="0 0 600 560"><!-- calendar icon in range -->
<g fill="#cfcfcf">
<rect x="555" y="530" width="20" height="4.4"/>
<rect x="558" y="528" width="1.6" height="2.5"/><rect x="570.4" y="528" width="1.6" height="2.5"/>
<rect x="555" y="534" width="2" height="7"/>
<rect x="573" y="534" width="2" height="13"/>
<rect x="562.5" y="545.2" width="12.5" height="1.9"/>
<rect x="566" y="542.4" width="1.5" height="1.5"/>
</g>
<g stroke="#cfcfcf" stroke-width="1.9" fill="none">
<path d="M552 543.1 H563"/><path d="M559.3 539.4 L563.2 543.1 L559.3 546.8"/>
</g>
</svg>
<!-- splitter -->
<svg class="a" style="left:995px;top:559px" width="44" height="10">
<g fill="#8c8c8c"><rect x="2" y="3" width="8" height="1.6"/><rect x="2" y="6" width="8" height="1.6"/><rect x="31" y="3" width="7" height="1.6"/><rect x="31" y="6" width="7" height="1.6"/><path d="M16 3 L24.7 3 L20.35 7.7 Z"/></g>
</svg>
<!-- Отзывы -->
<div class="a" style="left:1811px;top:568px;width:101px;height:31px;background:#3c3c3c;border-radius:5px"></div>
<div class="t" style="left:1819px;top:575px;font-size:16.4px;color:#d6d6d6">Отзывы</div>
<svg class="a" style="left:1884px;top:573px" width="26" height="22">
<path d="M4 2 H20 Q22 2 22 4 V10 Q22 12 20 12 H10 L3.8 18.5 L4.2 12 Q2.5 12 2.5 10 V4 Q2.5 2 4 2 Z" fill="#2a2a2a" stroke="#ffffff" stroke-width="1.8" stroke-linejoin="round"/>
<rect x="5" y="4.8" width="6" height="4.6" fill="#008000"/><rect x="12" y="4.8" width="7" height="4.6" fill="#ff0000"/>
</svg>
<svg class="a" style="left:1912px;top:548px" width="5" height="42">
<g fill="#c8c8c8"><rect x="1" y="3" width="1.3" height="7"/><rect x="3.5" y="3" width="1.3" height="7"/>
<rect x="1" y="32" width="1.3" height="7"/><rect x="3.5" y="32" width="1.3" height="7"/>
<path d="M1 21 L5 17 V25 Z"/></g>
</svg>

<!-- TABS PANEL -->
<div class="a" style="left:66px;top:607px;width:1846px;height:439px;background:#545454;border:1px solid #646464;border-radius:0 6px 5px 5px"></div>
<div class="a" style="left:75px;top:652px;width:1829px;height:349px;background:#2a2a2a;border-radius:6px"></div>


<!-- FILTER ROW -->
<div class="a" style="left:66px;top:607px;width:1840px;height:1px;background:#616161"></div>
<div class="inp" style="left:75px;width:270px"></div>
<svg class="a" style="left:322px;top:620px" width="22" height="22">
<circle cx="12.5" cy="8.5" r="5.2" stroke="#c8c8c8" stroke-width="2" fill="none"/>
<path d="M8.8 12.2 L3.5 17.5" stroke="#c8c8c8" stroke-width="3" stroke-linecap="round"/>
</svg>
<div class="inp" style="left:353px;width:172px;padding-left:8px">Все направлен…</div>
<div class="arr" style="left:510px;top:627px"></div>
<div class="t" style="left:532px;top:623px;font-size:16.4px;color:#f0f0f0">Период:</div>
<div class="a" style="left:602px;top:622px;width:16px;height:16px;border-radius:50%;background:#2a2a2a"></div>
<div class="inp" style="left:626px;width:150px;padding-left:9px;background:#4a4a4a;color:#8c8c8c">Текущий месяц</div>
<div class="arr" style="left:761px;top:627px;border-top-color:#7a7a7a"></div>
<div class="a" style="left:791px;top:622px;width:16px;height:16px;border-radius:50%;background:#2a2a2a"></div>
<div class="a" style="left:795px;top:626px;width:8px;height:8px;border-radius:50%;background:#c8c8c8"></div>
<div class="inp" style="left:815px;width:132px;padding-left:7px">01/03/2026</div>
<div class="arr" style="left:931px;top:625px"></div>
<div class="a" style="left:957px;top:629px;width:13px;height:2px;background:#f0f0f0"></div>
<div class="inp" style="left:977px;width:132px;padding-left:7px">01/04/2026</div>
<div class="arr" style="left:1093px;top:625px"></div>
<div class="a" style="left:782px;top:607px;width:336px;height:44px;border:5px solid #ff0000;border-radius:3px"></div>
<div class="a" style="left:1624px;top:616px;width:149px;height:29px;background:#009245;border-radius:4px;color:#fff;font-size:16.4px;line-height:29px;text-align:center">История ордеров</div>
<div class="a" style="left:1781px;top:616px;width:122px;height:29px;background:#009245;border-radius:4px;color:#fff;font-size:16.4px;line-height:29px;padding-left:15px">Выписка</div>
<div class="a" style="left:1877px;top:621px;width:1px;height:19px;background:#1a6e3a"></div>
<div class="arr" style="left:1884px;top:626px;border-left-width:6px;border-right-width:6px;border-top:8px solid #fff"></div>

<!-- TABLE HEADER -->
<div class="th" style="left:189px">Инструмент</div>
<div class="csep" style="left:342px"></div>
<div class="th" style="left:350px;width:213px;overflow:hidden">Открывающее направление</div>
<div class="csep" style="left:566px"></div>
<div class="th" style="left:708px;width:200px;text-align:center">Время открытия</div>
<div class="csep" style="left:1042px"></div>
<div class="th" style="left:1105px;width:200px;text-align:center">Чистая прибыль $</div>
<div class="csep" style="left:1360px"></div>
<div class="th" style="left:1409px;width:100px;text-align:center">Пипы</div>
<div class="csep" style="left:1550px"></div>
<div class="th" style="left:1660px">Баланс $</div>
<div class="a" style="left:1739px;top:660px;width:15px;height:20px;border:1.5px solid #cfcfcf;border-radius:3px;color:#cfcfcf;font-size:13px;line-height:17px;text-align:center">1</div>
<div class="arr" style="left:1759px;top:663px;border-top:none;border-bottom:8px solid #cfcfcf"></div>
<div class="csep" style="left:1868px"></div>
<div class="arr" style="left:1884px;top:660px;border-left-width:6px;border-right-width:6px;border-top:none;border-bottom:10px solid #7a7a7a"></div>

<!-- ROWS -->

<div class="ib" style="top:688px">i</div>
<div class="td" style="top:685px;left:85.5px;color:#f0f0f0">#USOil_J26</div>
<div class="td" style="top:685px;left:307.5px;color:#f0f0f0">Купить</div>
<div class="td" style="top:685px;left:657px;color:#f0f0f0">05/03/2026 09:00:52.214</div>
<div class="td" style="top:685px;left:1055px;color:#22b522">6.50</div>
<div class="td" style="top:685px;left:1309.5px;color:#22b522">6.5</div>
<div class="td" style="top:685px;left:1563.5px;color:#f0f0f0">19 793.45</div>
<div class="a" style="left:124px;top:717px;width:1748px;height:2px;background:#474747"></div>
<div class="ib" style="top:722px">i</div>
<div class="td" style="top:719px;left:85.5px;color:#f0f0f0">#USOil_J26</div>
<div class="td" style="top:719px;left:307.5px;color:#f0f0f0">Купить</div>
<div class="td" style="top:719px;left:657px;color:#f0f0f0">05/03/2026 09:00:54.246</div>
<div class="td" style="top:719px;left:1055px;color:#22b522">2.50</div>
<div class="td" style="top:719px;left:1309.5px;color:#22b522">2.5</div>
<div class="td" style="top:719px;left:1563.5px;color:#f0f0f0">19 795.95</div>
<div class="a" style="left:124px;top:751px;width:1748px;height:2px;background:#474747"></div>
<div class="ib" style="top:756px">i</div>
<div class="td" style="top:753px;left:85.5px;color:#f0f0f0">#USOil_J26</div>
<div class="td" style="top:753px;left:307.5px;color:#f0f0f0">Купить</div>
<div class="td" style="top:753px;left:657px;color:#f0f0f0">05/03/2026 09:13:50.298</div>
<div class="td" style="top:753px;left:1055px;color:#22b522">130.50</div>
<div class="td" style="top:753px;left:1309.5px;color:#22b522">130.5</div>
<div class="td" style="top:753px;left:1563.5px;color:#f0f0f0">19 926.45</div>
<div class="a" style="left:124px;top:785px;width:1748px;height:2px;background:#474747"></div>
<div class="ib" style="top:790px">i</div>
<div class="td" style="top:787px;left:85.5px;color:#f0f0f0">#USOil_J26</div>
<div class="td" style="top:787px;left:307.5px;color:#f0f0f0">Купить</div>
<div class="td" style="top:787px;left:657px;color:#f0f0f0">05/03/2026 12:18:12.636</div>
<div class="td" style="top:787px;left:1055px;color:#22b522">304.00</div>
<div class="td" style="top:787px;left:1309.5px;color:#22b522">304.0</div>
<div class="td" style="top:787px;left:1563.5px;color:#f0f0f0">20 230.45</div>
<div class="a" style="left:124px;top:819px;width:1748px;height:2px;background:#474747"></div>
<div class="ib" style="top:824px">i</div>
<div class="td" style="top:821px;left:85.5px;color:#f0f0f0">#USOil_J26</div>
<div class="td" style="top:821px;left:307.5px;color:#f0f0f0">Купить</div>
<div class="td" style="top:821px;left:657px;color:#f0f0f0">05/03/2026 09:13:49.193</div>
<div class="td" style="top:821px;left:1055px;color:#22b522">129.50</div>
<div class="td" style="top:821px;left:1309.5px;color:#22b522">129.5</div>
<div class="td" style="top:821px;left:1563.5px;color:#f0f0f0">20 359.95</div>
<div class="a" style="left:124px;top:853px;width:1748px;height:2px;background:#474747"></div>
<div class="ib" style="top:858px">i</div>
<div class="td" style="top:855px;left:85.5px;color:#f0f0f0">#USOil_J26</div>
<div class="td" style="top:855px;left:307.5px;color:#f0f0f0">Продать</div>
<div class="td" style="top:855px;left:657px;color:#f0f0f0">06/03/2026 15:15:10.344</div>
<div class="td" style="top:855px;left:1055px;color:#22b522">20.25</div>
<div class="td" style="top:855px;left:1309.5px;color:#22b522">13.5</div>
<div class="td" style="top:855px;left:1563.5px;color:#f0f0f0">20 380.20</div>
<div class="a" style="left:124px;top:887px;width:1748px;height:2px;background:#474747"></div>
<div class="ib" style="top:892px">i</div>
<div class="td" style="top:889px;left:85.5px;color:#f0f0f0">#USOil_J26</div>
<div class="td" style="top:889px;left:307.5px;color:#f0f0f0">Купить</div>
<div class="td" style="top:889px;left:657px;color:#f0f0f0">06/03/2026 15:47:13.017</div>
<div class="td" style="top:889px;left:1055px;color:#22b522">18.60</div>
<div class="td" style="top:889px;left:1309.5px;color:#22b522">3.1</div>
<div class="td" style="top:889px;left:1563.5px;color:#f0f0f0">20 398.80</div>
<div class="a" style="left:124px;top:921px;width:1748px;height:2px;background:#474747"></div>
<div class="ib" style="top:926px">i</div>
<div class="td" style="top:923px;left:85.5px;color:#f0f0f0">#USOil_K26</div>
<div class="td" style="top:923px;left:307.5px;color:#f0f0f0">Купить</div>
<div class="td" style="top:923px;left:657px;color:#f0f0f0">23/03/2026 14:08:25.298</div>
<div class="td" style="top:923px;left:1055px;color:#22b522">2 543.63</div>
<div class="td" style="top:923px;left:1309.5px;color:#22b522">508.7258</div>
<div class="td" style="top:923px;left:1563.5px;color:#f0f0f0">22 280.42</div>
<!-- scrollbar -->
<div class="a" style="left:1886px;top:878px;width:9px;height:55px;background:#7a7a7a;border-radius:5px"></div>
<div class="arr" style="left:1884px;top:942px;border-left-width:6px;border-right-width:6px;border-top:10px solid #7a7a7a"></div>
<!-- realized -->
<div class="a" style="left:1695px;top:958px;width:213px;height:44px;border:5px solid #ff0000;border-radius:3px;background:#2a2a2a"></div>
<div class="t" style="left:1702px;top:972px;font-size:16.4px;color:#f0f0f0">Реализовано:  $  <span style="color:#22b522">3 405.87</span></div>
<!-- footer -->
<div class="t" style="left:886px;top:1015px;font-size:16.6px;color:#e0e0e0">Баланс: $ 22 280.42</div>
<div class="a" style="left:1859px;top:1009px;width:1px;height:28px;background:#666"></div>
<svg class="a" style="left:1877px;top:1011px" width="24" height="24" viewBox="0 0 24 24"><path d="M10.17 5.82 L11.80 2.02 L13.20 2.02 L14.83 5.82 L15.22 5.99 L19.06 4.45 L20.05 5.44 L18.51 9.28 L18.68 9.67 L22.48 11.30 L22.48 12.70 L18.68 14.33 L18.51 14.72 L20.05 18.56 L19.06 19.55 L15.22 18.01 L14.83 18.18 L13.20 21.98 L11.80 21.98 L10.17 18.18 L9.78 18.01 L5.94 19.55 L4.95 18.56 L6.49 14.72 L6.32 14.33 L2.52 12.70 L2.52 11.30 L6.32 9.67 L6.49 9.28 L4.95 5.44 L5.94 4.45 L9.78 5.99 Z" fill="#d0d0d0"/><circle cx="12.5" cy="12" r="6.3" fill="#d0d0d0"/><circle cx="12.5" cy="12" r="3.3" fill="#545454"/></svg>
<!-- status bar -->
<div class="a" style="left:74px;top:1060px;width:8px;height:8px;border-radius:50%;background:#ff0000"></div>
<div class="a" style="left:1401px;top:1043px;width:366px;height:36px;border:5px solid #ff0000;border-radius:3px"></div>
<div class="t" style="left:1414.5px;top:1056px;font-size:16.3px;color:#f0f0f0">Текущее время:  01/04/2026 09:27:41   UTC+3</div>
<div class="arr" style="left:1774px;top:1060px;border-top-color:#7a7a7a"></div>
<div class="t" style="left:1799.5px;top:1056px;font-size:16.4px;color:#f0f0f0">|</div><div class="t" style="left:1810px;top:1056px;font-size:16.4px;color:#f0f0f0">25 ms / 30 ms</div>

<!-- STATUS -->
<div class="a" style="left:0;top:1080px;width:1917px;height:4px;background:#000"></div>
</body></html>
